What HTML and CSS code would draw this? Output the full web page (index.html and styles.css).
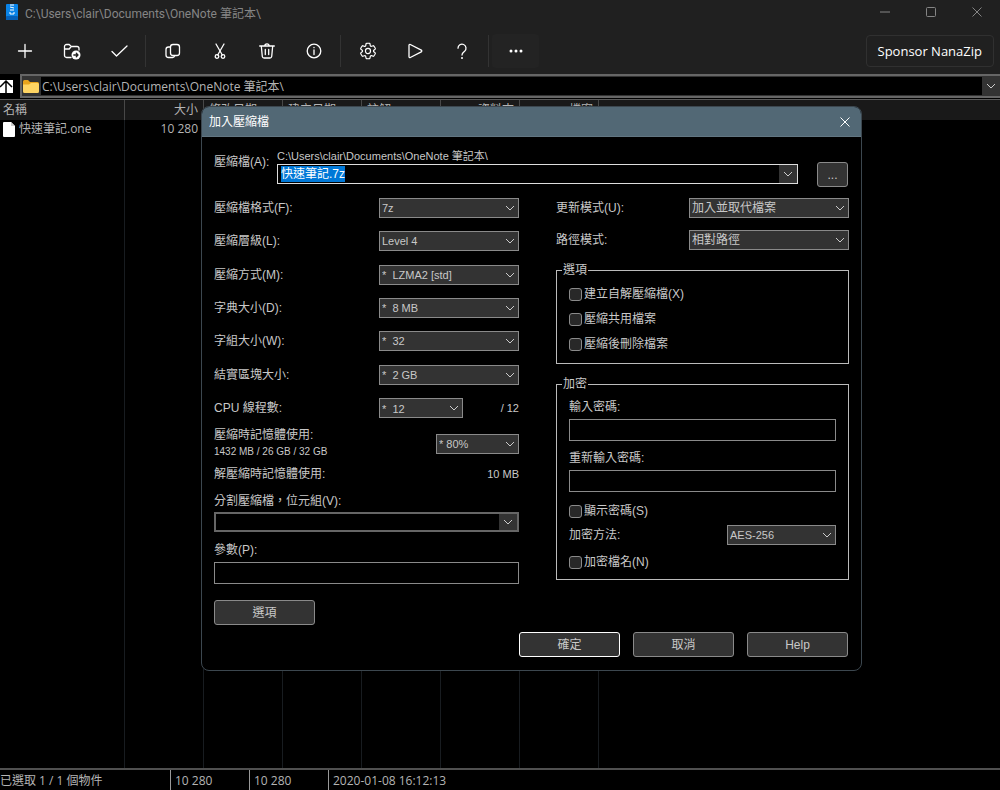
FILE: index.html
```html
<!DOCTYPE html>
<html lang="zh-Hant">
<head>
  <meta charset="UTF-8">
  <meta name="viewport" content="width=device-width, initial-scale=1.0">
  <title>NanaZip</title>
  <link rel="stylesheet" href="styles.css">
</head>
<body>
  <header class="titlebar">
    <svg class="app-icon" viewBox="0 0 12 16">
      <rect width="12" height="16" rx="1" fill="#0a84e8"/>
      <rect y="12" width="12" height="4" rx="1" fill="#0560b8"/>
      <path d="M4 1h4M4 3l4 1M4 6h4M4 8v2h4V8" stroke="#fff" stroke-width="1" fill="none"/>
    </svg>
    <span class="window-title">C:\Users\clair\Documents\OneNote 筆記本\</span>
    <div class="window-buttons">
      <button aria-label="Minimize"><svg viewBox="0 0 10 10"><path d="M0 5h10"/></svg></button>
      <button aria-label="Maximize"><svg viewBox="0 0 10 10"><rect x=".5" y=".5" width="9" height="9" rx="1"/></svg></button>
      <button aria-label="Close"><svg viewBox="0 0 10 10"><path d="M.5.5l9 9M9.500.5l-9 9"/></svg></button>
    </div>
  </header>

  <nav class="toolbar">
    <button class="tool" aria-label="Add"><svg viewBox="0 0 20 20"><path d="M10 3.500v13M3.500 10h13"/></svg></button>
    <button class="tool" aria-label="Extract"><svg viewBox="0 0 20 20"><path d="M9 16.500H4.500a2 2 0 0 1-2-2v-9a2 2 0 0 1 2-2h2.700l2 2h5.800a2 2 0 0 1 2 2v1.500M2.500 8h4.700l2-2.500"/><circle cx="14" cy="14" r="4.500" fill="#fff" stroke="none"/><path d="M11.800 14h4M14.300 12.300l1.700 1.700-1.700 1.700" stroke="#202020"/></svg></button>
    <button class="tool" aria-label="Test"><svg viewBox="0 0 20 20"><path d="M3 10.500l4.500 4.500L18 5"/></svg></button>
    <span class="tool-separator"></span>
    <button class="tool" aria-label="Copy"><svg viewBox="0 0 20 20"><rect x="7.500" y="3.500" width="9" height="11" rx="2.500"/><path d="M7 6H5.500a2.500 2.500 0 0 0-2.500 2.500V14a2.500 2.500 0 0 0 2.500 2.500h4a2.500 2.500 0 0 0 2.200-1.800"/></svg></button>
    <button class="tool" aria-label="Move"><svg viewBox="0 0 20 20"><path d="M6 3l6.300 11M14 3L7.700 14"/><circle cx="7" cy="15.500" r="1.800"/><circle cx="13" cy="15.500" r="1.800"/></svg></button>
    <button class="tool" aria-label="Delete"><svg viewBox="0 0 20 20"><path d="M2.700 5h14.600M4.300 5l1 10.500a1.800 1.800 0 0 0 1.800 1.500h5.800a1.800 1.800 0 0 0 1.800-1.500l1-10.500M7.800 5a2.200 2.200 0 0 1 4.400 0M8.300 8.500v5M11.700 8.500v5"/></svg></button>
    <button class="tool" aria-label="Info"><svg viewBox="0 0 20 20"><circle cx="10" cy="10" r="6.800"/><path d="M10 9v4.500M10 6.300v.4"/></svg></button>
    <span class="tool-separator"></span>
    <button class="tool" aria-label="Options"><svg viewBox="-1 -1 22 22"><path d="M1.910 7.380A8.500 8.500 0 0 1 3.700 4.300a.5.5 0 0 1 .54-.13l1.920.68a1 1 0 0 0 1.320-.76l.36-2a.5.5 0 0 1 .4-.4 8.530 8.530 0 0 1 3.550 0c.2.04.35.2.38.4l.37 2a1 1 0 0 0 1.320.76l1.920-.68a.5.5 0 0 1 .54.13 8.500 8.500 0 0 1 1.780 3.080c.06.2 0 .4-.15.54l-1.560 1.320a1 1 0 0 0 0 1.520l1.560 1.320a.5.5 0 0 1 .15.54 8.500 8.500 0 0 1-1.780 3.080.5.5 0 0 1-.54.13l-1.920-.68a1 1 0 0 0-1.320.76l-.37 2a.5.5 0 0 1-.38.4 8.530 8.530 0 0 1-3.560 0 .5.5 0 0 1-.39-.4l-.36-2a1 1 0 0 0-1.320-.76l-1.920.68a.5.5 0 0 1-.54-.13 8.500 8.500 0 0 1-1.780-3.080.5.5 0 0 1 .15-.54l1.560-1.320a1 1 0 0 0 0-1.520L2.060 7.920a.5.5 0 0 1-.15-.54Z"/><circle cx="10" cy="10" r="2.800"/></svg></button>
    <button class="tool" aria-label="Benchmark"><svg viewBox="0 0 20 20"><path d="M4 4.300v11.400a.9.9 0 0 0 1.300.8l11-5.700a.9.9 0 0 0 0-1.600l-11-5.700a.9.9 0 0 0-1.300.8Z"/></svg></button>
    <button class="tool" aria-label="Help"><svg viewBox="0 0 20 20"><path d="M6 7.200a4 4 0 1 1 6.600 3C11 11.500 10 12 10 14"/><circle cx="10" cy="17" r="1" fill="#fff" stroke="none"/></svg></button>
    <span class="tool-separator"></span>
    <button class="tool tool-more" aria-label="More"><svg viewBox="0 0 20 20"><g fill="#fff" stroke="none"><circle cx="5" cy="10" r="1.500"/><circle cx="10" cy="10" r="1.500"/><circle cx="15" cy="10" r="1.500"/></g></svg></button>
    <button class="sponsor">Sponsor NanaZip</button>
  </nav>

  <div class="address-bar">
    <button class="up" aria-label="Up"><svg viewBox="0 0 13 13"><rect width="13" height="13" fill="#fff"/><path d="M6 13V2M0 7l6-6 6 6" stroke="#000" stroke-width="1.500" fill="none"/></svg></button>
    <div class="address">
      <svg class="folder" viewBox="0 0 16 13"><path d="M0 1.500A1.500 1.500 0 0 1 1.500 0H5l2 2h7.500A1.500 1.500 0 0 1 16 3.500V5H0Z" fill="#e8a41c"/><path d="M0 4.500h6L8 3h6.500A1.500 1.500 0 0 1 16 4.500v7a1.500 1.500 0 0 1-1.500 1.500h-13A1.500 1.500 0 0 1 0 11.500Z" fill="#ffd563"/></svg>
      <input type="text" aria-label="Path" value="C:\Users\clair\Documents\OneNote 筆記本\">
      <button class="drop" aria-label="Open path list"><svg viewBox="0 0 10 6"><path d="M1 1l4 4 4-4"/></svg></button>
    </div>
  </div>

  <main class="file-area">
    <table class="file-list">
      <thead>
        <tr>
          <th class="name">名稱</th>
          <th class="number">大小</th>
          <th>修改日期</th>
          <th>建立日期</th>
          <th>註解</th>
          <th class="number">資料夾</th>
          <th class="number">檔案</th>
          <th class="rest"></th>
        </tr>
      </thead>
      <tbody>
        <tr>
          <td class="name"><svg class="file-icon" viewBox="0 0 12 15"><path d="M0 1a1 1 0 0 1 1-1h7l4 4v10a1 1 0 0 1-1 1H1a1 1 0 0 1-1-1Z" fill="#fff"/><path d="M8 0v4h4" fill="#ccc"/></svg>快速筆記.one</td>
          <td class="number">10 280</td>
          <td></td><td></td><td></td><td></td><td></td><td></td>
        </tr>
        <tr class="filler"><td></td><td></td><td></td><td></td><td></td><td></td><td></td><td></td></tr>
      </tbody>
    </table>
  </main>

  <footer class="status-bar">
    <span class="status-selected">已選取 1 / 1 個物件</span>
    <span>10 280</span>
    <span>10 280</span>
    <span class="status-date">2020-01-08 16:12:13</span>
  </footer>

  <form class="dialog" role="dialog" aria-labelledby="dialogTitle" onsubmit="return false">
    <div class="dialog-title">
      <h1 id="dialogTitle">加入壓縮檔</h1>
      <button type="button" class="dialog-close" aria-label="Close"><svg viewBox="0 0 10 10"><path d="M.5.5l9 9M9.500.5l-9 9"/></svg></button>
    </div>

    <div class="dialog-body">
      <div class="archive-row">
        <label for="archive">壓縮檔(A):</label>
        <div class="archive-path">
          <span>C:\Users\clair\Documents\OneNote 筆記本\</span>
          <div class="combo active">
            <input type="text" id="archive" value="快速筆記.7z">
            <button type="button" class="drop" aria-label="Recent archives"><svg viewBox="0 0 10 6"><path d="M1 1l4 4 4-4"/></svg></button>
          </div>
        </div>
        <button type="button" class="button browse">...</button>
      </div>

      <div class="columns">
        <div class="left">
          <div class="fields">
            <div class="field"><label for="format">壓縮檔格式(F):</label><select id="format"><option>7z</option></select></div>
            <div class="field"><label for="level">壓縮層級(L):</label><select id="level"><option>Level 4</option></select></div>
            <div class="field"><label for="method">壓縮方式(M):</label><select id="method"><option>*&nbsp; LZMA2 [std]</option></select></div>
            <div class="field"><label for="dictionary">字典大小(D):</label><select id="dictionary"><option>*&nbsp; 8 MB</option></select></div>
            <div class="field"><label for="word">字組大小(W):</label><select id="word"><option>*&nbsp; 32</option></select></div>
            <div class="field"><label for="block">結實區塊大小:</label><select id="block"><option>*&nbsp; 2 GB</option></select></div>
            <div class="field"><label for="threads">CPU 線程數:</label><div class="threads"><select id="threads"><option>*&nbsp; 12</option></select><span>/ 12</span></div></div>
          </div>
          <div class="memory">
            <label for="memory">壓縮時記憶體使用:<br><span class="memory-size">1432 MB / 26 GB / 32 GB</span></label>
            <select id="memory"><option>* 80%</option></select>
          </div>
          <div class="memory-unpack"><span>解壓縮時記憶體使用:</span><span class="value">10 MB</span></div>
          <label class="stacked" for="volumes">分割壓縮檔，位元組(V):</label>
          <div class="combo">
            <input type="text" id="volumes">
            <button type="button" class="drop" aria-label="Volume sizes"><svg viewBox="0 0 10 6"><path d="M1 1l4 4 4-4"/></svg></button>
          </div>
          <label class="stacked parameters" for="parameters">參數(P):</label>
          <input class="text" type="text" id="parameters">
          <button type="button" class="button options">選項</button>
        </div>

        <div class="right">
          <div class="field wide"><label for="update">更新模式(U):</label><select id="update"><option>加入並取代檔案</option></select></div>
          <div class="field wide"><label for="pathMode">路徑模式:</label><select id="pathMode"><option>相對路徑</option></select></div>
          <fieldset class="option-group">
            <legend>選項</legend>
            <label class="check"><input type="checkbox">建立自解壓縮檔(X)</label>
            <label class="check"><input type="checkbox">壓縮共用檔案</label>
            <label class="check"><input type="checkbox">壓縮後刪除檔案</label>
          </fieldset>
          <fieldset class="encryption">
            <legend>加密</legend>
            <label class="stacked" for="password">輸入密碼:</label>
            <input class="text" type="password" id="password">
            <label class="stacked" for="password2">重新輸入密碼:</label>
            <input class="text" type="password" id="password2">
            <label class="check show-password"><input type="checkbox">顯示密碼(S)</label>
            <div class="field cipher"><label for="cipher">加密方法:</label><select id="cipher"><option>AES-256</option></select></div>
            <label class="check"><input type="checkbox">加密檔名(N)</label>
          </fieldset>
        </div>
      </div>

      <div class="actions">
        <button type="submit" class="button default">確定</button>
        <button type="button" class="button">取消</button>
        <button type="button" class="button">Help</button>
      </div>
    </div>
  </form>

  <script>
    // archive name starts selected so it can be typed over
    const archive = document.getElementById('archive');
    archive.focus();
    archive.select();
  </script>
</body>
</html>
```
FILE: styles.css
```css
* {
  box-sizing: border-box;
}

body {
  display: flex;
  flex-direction: column;
  min-height: 100vh;
  margin: 0;
  background-color: #000;
  color: #b4b4b4;
  font-family: "Open Sans", "Noto Sans CJK TC", sans-serif;
  font-size: 12px;
}

button, input, select {
  font: inherit;
  color: inherit;
  margin: 0;
}

button {
  padding: 0;
  border: none;
  background: none;
}

input {
  min-width: 0;
  outline: none;
}

svg {
  display: block;
}

/* Main window */
.titlebar {
  display: flex;
  align-items: center;
  height: 24px;
  padding-left: 6px;
  background-color: #202020;
  color: #858585;
}

.app-icon {
  width: 12px;
  height: 16px;
  margin-right: 7px;
}

.window-title {
  font-family: Roboto, "Noto Sans CJK TC", sans-serif;
}

.window-buttons {
  display: flex;
  margin-left: auto;
}

.window-buttons button {
  display: flex;
  align-items: center;
  justify-content: center;
  width: 46px;
  height: 24px;
}

.window-buttons svg, .dialog-close svg {
  width: 10px;
  height: 10px;
  fill: none;
  stroke: #858585;
}

.toolbar {
  display: flex;
  align-items: center;
  height: 50px;
  padding: 4px 6px 0 1px;
  background-color: #202020;
}

.tool {
  display: flex;
  align-items: center;
  justify-content: center;
  width: 47px;
  height: 34px;
}

.tool svg {
  width: 20px;
  height: 20px;
  fill: none;
  stroke: #fff;
  stroke-width: 1.3;
  stroke-linecap: round;
  stroke-linejoin: round;
}

.tool-more {
  background-color: #232323;
  border-radius: 4px;
}

.tool-separator {
  width: 1px;
  height: 32px;
  margin: 0 3px;
  background-color: #333;
}

.sponsor {
  height: 32px;
  margin-left: auto;
  padding: 0 11px;
  border: 1px solid #303030;
  border-radius: 4px;
  color: #fff;
  font-size: 13px;
}

.address-bar {
  display: flex;
  align-items: center;
  gap: 7px;
  height: 24px;
}

.up svg {
  width: 13px;
  height: 13px;
}

.address {
  display: flex;
  flex: 1;
  align-items: center;
  height: 24px;
  border: 2px solid #666;
  border-right: none;
  background-color: #333;
}

.folder {
  width: 16px;
  height: 13px;
  margin: 0 2px 0 1px;
}

.address input {
  flex: 1;
  height: 18px;
  padding: 0 0 0 1px;
  border: none;
  background-color: #000;
}

.drop {
  display: flex;
  align-items: center;
  justify-content: center;
  width: 18px;
  background-color: #333;
}

.drop svg {
  width: 10px;
  height: 6px;
  fill: none;
  stroke: #ccc;
}

.file-area {
  display: flex;
  flex: 1;
  margin-top: 1px;
  border-top: 1px solid #5a5a5a;
}

.file-list {
  width: 100%;
  table-layout: fixed;
  border-collapse: separate;
  border-spacing: 0;
}

.file-list th {
  width: 79px;
  height: 20px;
  padding: 0 5px;
  border-right: 1px solid #484848;
  background-color: #191919;
  font-weight: normal;
  line-height: 20px;
  text-align: left;
}

.file-list td {
  height: 18px;
  padding: 0 5px;
  border-right: 1px solid #181c20;
  line-height: 18px;
  white-space: nowrap;
}

.file-list th.name {
  width: 125px;
  padding-left: 3px;
}

.file-list td.name {
  padding-left: 3px;
}

.file-list .number {
  text-align: right;
}

.file-list th.rest {
  width: auto;
}

.file-list .rest, .file-list td:last-child {
  border-right: none;
}

.file-list .filler td {
  height: 100%;
}

.file-icon {
  display: inline-block;
  width: 12px;
  height: 15px;
  margin-right: 4px;
  vertical-align: middle;
}

.status-bar {
  display: flex;
  height: 22px;
  border-top: 2px solid #505050;
  line-height: 22px;
}

.status-bar span {
  width: 79px;
  padding-left: 4px;
  border-left: 1px solid #999;
}

.status-bar .status-selected {
  width: 170px;
  padding-left: 0;
  border-left: none;
}

.status-bar .status-date {
  flex: 1;
}

/* Add to archive dialog */
.dialog {
  position: absolute;
  top: 106px;
  left: 201px;
  width: 661px;
  overflow: hidden;
  border: 1px solid #3c474f;
  border-radius: 8px;
  background-color: #000;
  color: #c8c8c8;
  font-family: "Liberation Sans", "Noto Sans CJK TC", sans-serif;
  font-size: 12px;
  line-height: 16px;
}

.dialog-title {
  display: flex;
  align-items: center;
  justify-content: space-between;
  height: 30px;
  padding: 0 11px 0 7px;
  border-bottom: 1px solid #627682;
  background-color: #526875;
  color: #fff;
}

.dialog-title h1 {
  margin: 0;
  font-size: 12px;
  font-weight: normal;
}

.dialog-close svg {
  stroke: #fff;
}

.dialog-body {
  padding: 11px 13px 13px 12px;
}

.archive-row {
  display: flex;
}

.archive-row > label {
  width: 63px;
  padding-top: 6px;
}

.archive-path {
  flex: 1;
  font-size: 11px;
}

.archive-path > span {
  display: block;
}

.combo {
  display: flex;
  height: 20px;
  border: 2px solid #666;
}

.combo.active {
  border: 1px solid #ddd;
}

.combo input {
  flex: 1;
  padding: 0 3px;
  border: none;
  background-color: #000;
  font-size: 12px;
}

.combo input::selection {
  background-color: #0078d7;
  color: #fff;
}

.button {
  width: 101px;
  height: 25px;
  border: 1px solid #8a8a8a;
  border-radius: 3px;
  background-color: #333;
}

.button.browse {
  align-self: flex-end;
  width: 31px;
  margin: 0 0 -3px 19px;
}

.button.default {
  border-color: #fff;
}

.columns {
  display: grid;
  grid-template-columns: 305px 293px;
  gap: 37px;
  margin-top: 14px;
}

.left {
  display: flex;
  flex-direction: column;
}

.fields {
  display: flex;
  flex-direction: column;
  justify-content: space-between;
  min-height: 220px;
}

.field {
  display: flex;
  align-items: center;
  justify-content: space-between;
}

select {
  width: 140px;
  height: 20px;
  padding: 0 20px 0 2px;
  border: 1px solid #8a8a8a;
  border-radius: 0;
  appearance: none;
  background: #333 url("data:image/svg+xml,%3Csvg xmlns='http://www.w3.org/2000/svg' width='10' height='6'%3E%3Cpath d='M1 1l4 4 4-4' fill='none' stroke='%23ccc'/%3E%3C/svg%3E") no-repeat right 3px center;
  font-size: 11px;
}

.threads {
  display: flex;
  justify-content: space-between;
  width: 140px;
  font-size: 11px;
  line-height: 20px;
}

.threads select {
  width: 84px;
}

.memory {
  display: flex;
  align-items: center;
  justify-content: space-between;
  margin-top: 9px;
}

.memory select {
  width: 83px;
}

.memory-size {
  font-size: 10px;
}

.memory-unpack {
  display: flex;
  justify-content: space-between;
  margin: 6px 0 11px;
}

.memory-unpack .value {
  font-size: 11px;
}

.stacked {
  display: block;
  margin-bottom: 4px;
}

.left .stacked {
  margin-bottom: 3px;
}

.left .stacked.parameters {
  margin: 10px 0 4px;
}

.text {
  display: block;
  width: 100%;
  height: 22px;
  border: 1px solid #8a8a8a;
  background-color: #000;
}

.button.options {
  margin-top: 16px;
}

.field.wide {
  margin-bottom: 12px;
}

.field.wide select {
  width: 160px;
  font-size: 12px;
}

fieldset {
  min-width: 0;
  margin: 0;
  padding: 0 12px;
  border: 1px solid #bbb;
}

legend {
  margin-left: -7px;
  padding: 0 1px;
}

.option-group {
  padding: 8px 12px 11px;
}

.check {
  display: flex;
  align-items: center;
  gap: 2px;
}

.check + .check {
  margin-top: 9px;
}

.check input {
  width: 13px;
  height: 13px;
  border: 1px solid #8a8a8a;
  border-radius: 3px;
  appearance: none;
  background-color: #282828;
}

.encryption {
  margin-top: 12px;
  padding: 7px 12px 9px;
}

.encryption .text {
  margin-bottom: 9px;
}

.encryption .show-password {
  margin-top: 11px;
}

.field.cipher {
  margin: 6px 0 9px;
}

.field.cipher select {
  width: 109px;
}

.actions {
  display: flex;
  justify-content: flex-end;
  gap: 13px;
  margin-top: 7px;
}
```
